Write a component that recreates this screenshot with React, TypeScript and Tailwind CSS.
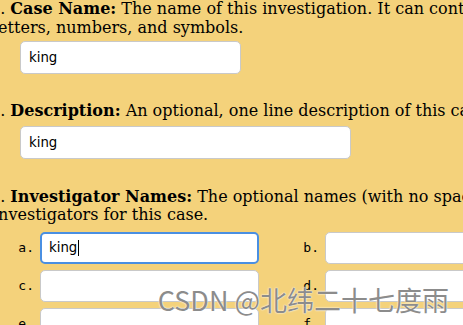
import React from "react";

const serif = { fontFamily: '"DejaVu Serif", serif' };

const Field = ({ value = "", w, h = "h-[33px]" }: { value?: string; w: string; h?: string }) => (
  <input
    readOnly
    value={value}
    className={`${w} ${h} shrink-0 rounded-[5px] border border-[#c9c9c9] bg-white px-2 text-[13.33px] text-black outline-none font-['DejaVu_Sans',sans-serif]`}
  />
);

const Label = ({ children, w, pr }: { children: React.ReactNode; w: string; pr: string }) => (
  <div className={`${w} ${pr} shrink-0 text-right text-[13px] text-black font-['DejaVu_Sans_Mono',monospace]`}>
    {children}
  </div>
);

const Para = ({ className = "", children }: { className?: string; children: React.ReactNode }) => (
  <p
    className={`ml-[-7px] indent-[-3px] whitespace-nowrap text-[16px] leading-[18.6px] ${className}`}
    style={serif}
  >
    {children}
  </p>
);

const App = () => {
  return (
    <div className="relative h-[325px] w-[463px] overflow-hidden bg-[#f4d27b] text-black">
      <Para>
        1. <b>Case Name:</b> The name of this investigation. It can contain
        <br />
        letters, numbers, and symbols.
      </Para>
      <div className="mt-[4px] pl-[20px]">
        <Field value="king" w="w-[221px]" />
      </div>

      <Para className="mt-[28px]">
        2. <b>Description:</b> An optional, one line description of this case.
      </Para>
      <div className="mt-[5px] pl-[20px]">
        <Field value="king" w="w-[331px]" />
      </div>

      <Para className="mt-[29px]">
        3. <b>Investigator Names:</b> The optional names (with no spaces) of the
        <br />
        investigators for this case.
      </Para>

      <div className="mt-[7px] flex flex-col gap-[6px]">
        <div className="flex items-center">
          <Label w="w-[40px]" pr="pr-[6px]">a.</Label>
          <div className="flex h-[32px] w-[219px] shrink-0 items-center rounded-[5px] border-2 border-[#4a8fe2] bg-white px-[7px] text-[13.33px] font-['DejaVu_Sans',sans-serif]">
            king
            <span className="ml-px inline-block h-[16px] w-px bg-black" />
          </div>
          <Label w="w-[66px]" pr="pr-[6px]">b.</Label>
          <Field w="w-[219px]" h="h-[32px]" />
        </div>
        <div className="flex items-center">
          <Label w="w-[40px]" pr="pr-[6px]">c.</Label>
          <Field w="w-[219px]" h="h-[32px]" />
          <Label w="w-[66px]" pr="pr-[6px]">d.</Label>
          <Field w="w-[219px]" h="h-[32px]" />
        </div>
        <div className="flex items-center">
          <Label w="w-[40px]" pr="pr-[6px]">e.</Label>
          <Field w="w-[219px]" h="h-[32px]" />
          <Label w="w-[66px]" pr="pr-[6px]">f.</Label>
          <Field w="w-[219px]" h="h-[32px]" />
        </div>
      </div>

      {/* watermark */}
      <div className="absolute right-[14px] top-[281px] whitespace-nowrap text-[27px] leading-[38px] text-[#8c8c8c] [text-shadow:0_0_2px_#fff,0_0_1px_#fff] font-['Noto_Sans_CJK_SC',sans-serif]">
        CSDN @北纬二十七度雨
      </div>
    </div>
  );
};

export default App;
